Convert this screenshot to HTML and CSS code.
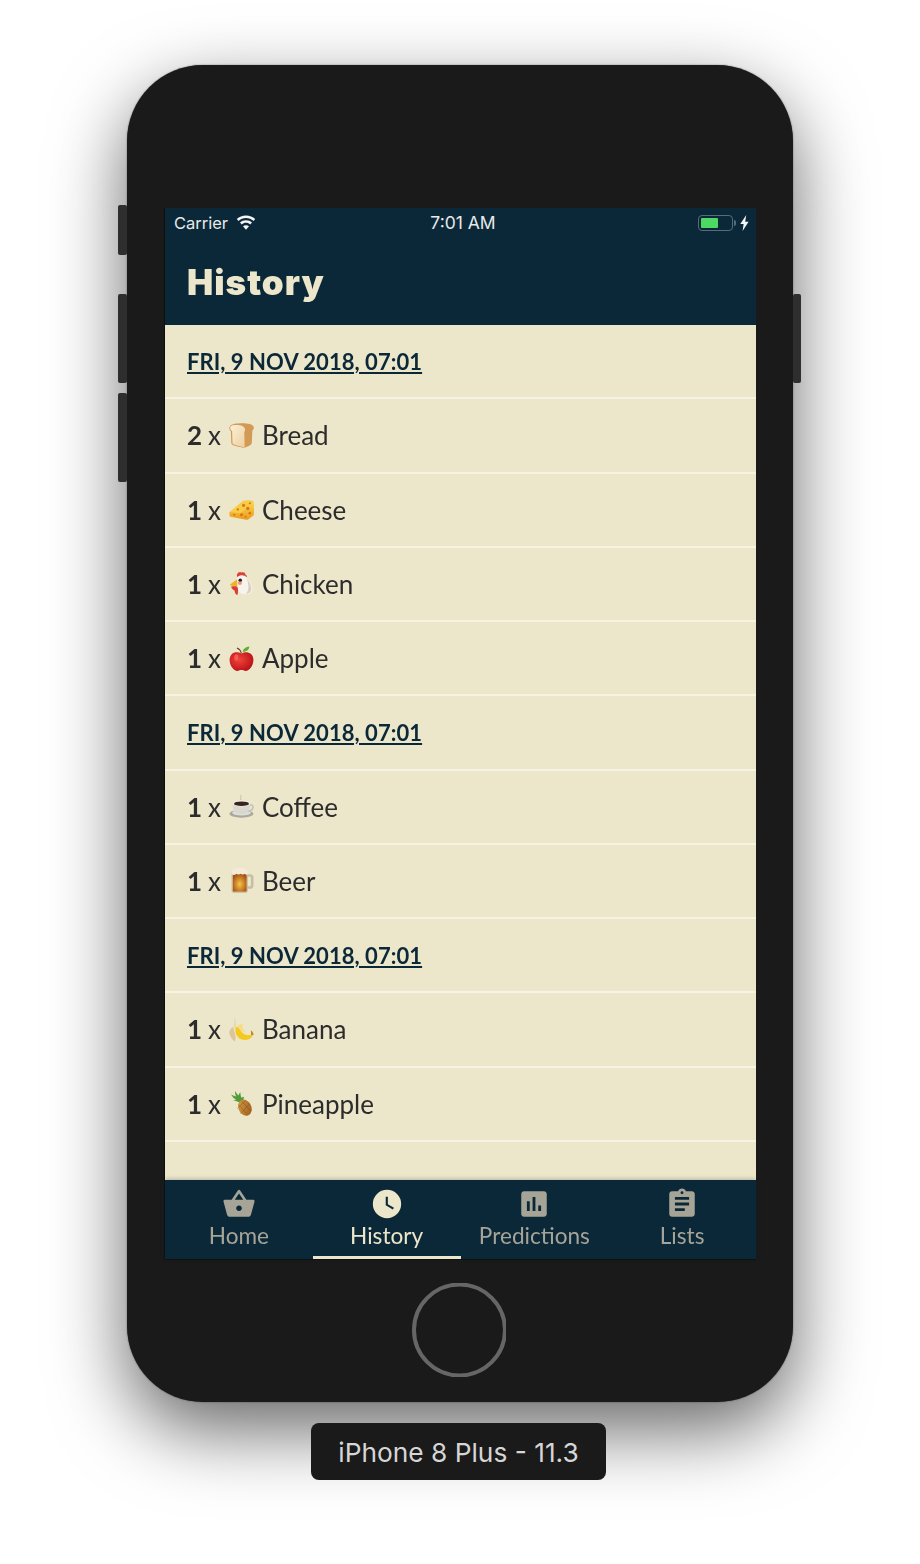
FILE: index.html
```html
<!DOCTYPE html>
<html lang="en">
<head>
<meta charset="utf-8">
<title>History</title>
<link rel="stylesheet" href="styles.css">
</head>
<body>
<svg class="defs" width="0" height="0" aria-hidden="true">
  <defs>
    <linearGradient id="g-bread" x1="0" y1="0" x2="1" y2="1"><stop offset="0" stop-color="#fbf0d8"/><stop offset="1" stop-color="#ecd0a0"/></linearGradient>
    <linearGradient id="g-cheese" x1="0" y1="0" x2="0" y2="1"><stop offset="0" stop-color="#fbd54c"/><stop offset="1" stop-color="#eb9b1e"/></linearGradient>
    <radialGradient id="g-apple" cx=".4" cy=".4" r=".7"><stop offset="0" stop-color="#f2443c"/><stop offset="1" stop-color="#b30d14"/></radialGradient>
    <radialGradient id="g-beer" cx=".5" cy=".6" r=".6"><stop offset="0" stop-color="#f9c24a"/><stop offset="1" stop-color="#a5510f"/></radialGradient>
    <linearGradient id="g-pine" x1="0" y1="0" x2="1" y2="1"><stop offset="0" stop-color="#d9a044"/><stop offset="1" stop-color="#96591c"/></linearGradient>
  </defs>
</svg>

<main class="phone">
  <span class="side-btn vol-a"></span>
  <span class="side-btn vol-b"></span>
  <span class="side-btn vol-c"></span>
  <span class="side-btn power"></span>

  <section class="screen">
    <header class="app-header">
      <div class="status-bar">
        <div class="status-left">
          <span>Carrier</span>
          <svg class="wifi" viewBox="0 0 20 15"><path d="M10 2C6.4 2 3.2 3.3.8 5.5l1.7 1.9C4.5 5.6 7.1 4.5 10 4.5s5.500 1.100 7.500 2.900l1.700-1.900C16.800 3.300 13.600 2 10 2z" transform="translate(0 -1.500)"/><path d="M10 6c-2.300 0-4.400.9-6 2.300l1.800 1.900C6.900 9.200 8.400 8.600 10 8.600s3.100.6 4.200 1.600L16 8.300C14.400 6.900 12.300 6 10 6z" transform="translate(0 -.8)"/><path d="M10 10.200c-1.200 0-2.200.4-3 1.100l3 3.400 3-3.400c-.8-.7-1.800-1.100-3-1.100z"/></svg>
        </div>
        <time class="status-time">7:01 AM</time>
        <div class="status-right">
          <span class="battery"><span class="battery-fill"></span></span>
          <span class="battery-nub"></span>
          <svg class="bolt" viewBox="0 0 9 16"><path d="M6.200 0 .3 9h3.300L2.600 16l6-9.300H5.200z"/></svg>
        </div>
      </div>
      <h1 class="title">History</h1>
    </header>

    <div class="list">
      <div class="row date-row"><a class="date">FRI, 9 NOV 2018, 07:01</a></div>

      <div class="row item">
        <b class="qty">2</b><span class="times">x</span>
        <svg class="emoji" viewBox="0 0 24 24"><path d="M1 3C3 .8 8 .2 13 .3c5 .1 10 .8 10.700 3.500.4 1.600-.5 3-1.300 3.700l-.5 11.500c-.1 1.500-1.500 2.400-3.500 3.200-1.500.6-3 1.300-4.400 1.500-3-.5-7-1.300-10.300-2.700-1-.5-1.500-1-1.500-2L1.800 8C.3 6.800-.2 4.300 1 3z" fill="#d29a55"/><path d="M1.600 3.400C3.500 1.600 9.500 1.500 13 3c2.800 1.200 3 4 1.700 5.300l.3 14.900c-3.700-.6-7.700-1.500-10.600-2.800-.8-.4-1.100-.8-1.100-1.500L3 7.800C1.300 6.800.6 4.500 1.600 3.400z" fill="url(#g-bread)"/></svg>
        <span class="name">Bread</span>
      </div>

      <div class="row item">
        <b class="qty">1</b><span class="times">x</span>
        <svg class="emoji" viewBox="0 0 24 24"><path d="M.5 14.500 13.500 3.500c3-.5 7-.8 10 .3v4L6 18.500 1 17z" fill="#f8cc47"/><path d="M.5 14.500v3.200c0 .7.500 1 1 1.200l15 3c.8.100 1.300 0 1.900-.4l5-3.800c.4-.3.6-.7.6-1.200V5.500L10.500 15.700z" fill="url(#g-cheese)"/><g fill="#d8751a"><circle cx="14" cy="8" r="1.500"/><circle cx="18" cy="11" r="1.600"/><circle cx="8.500" cy="12" r="1.100"/><circle cx="12" cy="17" r="1.500"/><circle cx="20" cy="15.500" r="1.300"/><circle cx="5" cy="17" r="1"/><circle cx="16" cy="19" r=".9"/><circle cx="20" cy="6" r="1"/></g></svg>
        <span class="name">Cheese</span>
      </div>

      <div class="row item">
        <b class="qty">1</b><span class="times">x</span>
        <svg class="emoji" viewBox="0 0 24 24"><path d="M7.500 3.500C9 .5 11 .5 12 1.500 14 .800 16 1.800 15.500 3.300c1.500.300 2 1.700 1.300 2.700H8z" fill="#dd3f35"/><path d="M8 6c2.500-2.500 7-2.500 9 .5 2.500 2 5 6.500 5.500 9.500.5 3.500-2 6-6 6.300-3.500.3-6.500-.8-7.500-3.300C8 17 7 12 8 6z" fill="#f7f4ec"/><path d="M17 7.500c2.500 2 4.500 6.500 4.500 9.500s-2.500 4.800-5.500 5c3-2 3.500-9 1-14.500z" fill="#d8d2c4"/><path d="M7.800 8 .8 13.200c-.2.700 3.200 1.500 7.200 1.300z" fill="#efb31f"/><path d="M2 15c2-.5 4.500-.5 6 0 1 2 1 5.500 0 8-1.500-.3-2.500-2-2.700-4.200C3.800 18 2.500 16.800 2 15z" fill="#d63f34"/><circle cx="10.800" cy="8.800" r="1.700" fill="#222"/><circle cx="10.500" cy="11.500" r="2" fill="#e8615a" opacity=".65"/></svg>
        <span class="name">Chicken</span>
      </div>

      <div class="row item">
        <b class="qty">1</b><span class="times">x</span>
        <svg class="emoji" viewBox="0 0 24 24"><path d="M12.400 7C11.800 4.500 10.500 2.500 8 1.500l-.6.8c2.300 1 3.700 2.700 4 4.900z" fill="#6a3a16"/><path d="M13 5.500c.5-2.700 3-4.700 6.500-5 0 3-2.700 5.300-6.500 5z" fill="#5fb02f"/><path d="M12 7.200C9 5.600 5 5.500 2.600 7.800-.5 11 .2 17 3 20.700c2 2.800 4.500 3.800 6.600 2.900 1.500-.6 3.300-.6 4.800 0 2.100.9 4.600-.1 6.600-2.900 2.800-3.700 3.500-9.700.4-12.900C18 5.500 15 5.600 12 7.200z" fill="url(#g-apple)"/><ellipse cx="7" cy="11" rx="2" ry="3" fill="#ff7d6e" opacity=".55"/></svg>
        <span class="name">Apple</span>
      </div>

      <div class="row date-row"><a class="date">FRI, 9 NOV 2018, 07:01</a></div>

      <div class="row item">
        <b class="qty">1</b><span class="times">x</span>
        <svg class="emoji" viewBox="0 0 24 24"><path d="M11 1c1.500 1.500-1 2.500.5 5" fill="none" stroke="#cfc9b5" stroke-width="1.200"/><ellipse cx="12" cy="19" rx="11.500" ry="3.800" fill="#a9a79e"/><ellipse cx="12" cy="18" rx="9" ry="2.600" fill="#dfdfda"/><path d="M3.500 9c0 5 2 9 4.500 9.800 2.500.6 5.500.6 8 0 2.500-.8 4.500-4.800 4.500-9.800z" fill="#d9d7cf"/><path d="M20 10.500c3.500-1 4.500 3.500.5 5.500l-2 .8" fill="none" stroke="#c3c1b7" stroke-width="1.500"/><ellipse cx="12" cy="9" rx="8.500" ry="2.900" fill="#efeee8"/><ellipse cx="12" cy="9.300" rx="7.200" ry="2.200" fill="#3a231a"/></svg>
        <span class="name">Coffee</span>
      </div>

      <div class="row item">
        <b class="qty">1</b><span class="times">x</span>
        <svg class="emoji" viewBox="0 0 24 24"><path d="M17 6h3.500c1.800 0 3 1.200 3 3v8c0 2-1.300 3-3 3H17v-2.500h3c.6 0 1-.4 1-1v-7c0-.6-.4-1-1-1h-3z" fill="#c8bda5"/><rect x="2.500" y="2.500" width="15.500" height="21.300" rx="2" fill="#c5b899"/><rect x="3.800" y="5" width="13" height="17.500" rx="1" fill="url(#g-beer)"/><path d="M2.500 6C1.500 2.700 4 .2 7 .5c2-1 5-1 7 0 2.500-.3 5 1.500 4 5.500-1 1-2.200.6-2.800-.5-1 1-3 1-4 0-1.300 1-3 1-4 0-1.200 1.300-3.500 1.500-4.700.5z" fill="#f3ead7"/></svg>
        <span class="name">Beer</span>
      </div>

      <div class="row date-row"><a class="date">FRI, 9 NOV 2018, 07:01</a></div>

      <div class="row item">
        <b class="qty">1</b><span class="times">x</span>
        <svg class="emoji" viewBox="0 0 24 24"><path d="M5 .2c1.500 1.500 2 5 1.500 9L4 13C5 8 4.800 4 5 .2z" fill="#e9d9b3"/><path d="M4 9.500c-2 1-3.500 3-3.800 5.500.5 3 2.500 6.500 5.500 8.500 1.300-3 .5-7.500-1-10.500z" fill="#dcc59a"/><path d="M6.500 9c1 1 1.800 1 3 .8 1 2.500 2.700 5.500 5.700 7 3 1.200 6 .5 8 .2-1.500 3.500-5.500 5.700-9.500 4.800C8.500 21 5 16 6.500 9z" fill="#f3c91d"/><path d="M8 8.500c2-1 3.500-2 5.500-2C12 9 13 13 17 15c-4-.5-8-2.500-9-6.500z" fill="#f6dd82"/><path d="M21 13c1.300.500 2.300 2 2.700 4l-2.500.6c0-1.500-.300-3.200-.2-4.600z" fill="#c28a1a"/></svg>
        <span class="name">Banana</span>
      </div>

      <div class="row item">
        <b class="qty">1</b><span class="times">x</span>
        <svg class="emoji" viewBox="0 0 24 24"><path d="M10.500 11.500C9 9.500 6 9.500 3 9c2 0 3-.2 4-.7C5 7.300 3.500 6 2 3c2 1.300 3.500 2 5 2.300C6 3.500 5.500 2 6 0c1 2 2 3.500 3.200 4.200C9.500 3 10 2 11 1.500c0 2 .3 3.700 1 5 .7-.5 1.500-.8 2.500-1-.5 2-1 4-2 6z" fill="#4f9c39"/><ellipse cx="15.300" cy="16" rx="6.200" ry="8" transform="rotate(-25 15.300 16)" fill="url(#g-pine)"/><g stroke="#7a4513" stroke-width=".5" fill="none" opacity=".7"><path d="M9 13l9 10M12 10l9 9M16 9l-8 8M20 12l-9 10"/></g></svg>
        <span class="name">Pineapple</span>
      </div>
    </div>

    <nav class="tabs">
      <a class="tab">
        <svg class="tab-icon" viewBox="0 0 24 24"><path d="M17.210 9l-4.380-6.560c-.190-.280-.510-.420-.830-.420-.320 0-.640.140-.830.430L6.790 9H2c-.550 0-1 .450-1 1 0 .090.010.180.040.270l2.540 9.270c.230.840 1 1.460 1.920 1.460h13c.920 0 1.690-.620 1.930-1.460l2.540-9.270L23 10c0-.550-.450-1-1-1h-4.790zM9 9l3-4.400L15 9H9zm3 8c-1.100 0-2-.9-2-2s.9-2 2-2 2 .9 2 2-.9 2-2 2z"/></svg>
        <span>Home</span>
      </a>
      <a class="tab active">
        <svg class="tab-icon" viewBox="0 0 24 24"><path d="M12 2a10 10 0 1 0 0 20 10 10 0 0 0 0-20zm.6 4.800v5.300l4.300 2.600-.8 1.200-5-3V6.800z"/></svg>
        <span>History</span>
      </a>
      <a class="tab">
        <svg class="tab-icon" viewBox="0 0 24 24"><path d="M19 3H5c-1.100 0-2 .9-2 2v14c0 1.100.9 2 2 2h14c1.100 0 2-.9 2-2V5c0-1.100-.9-2-2-2zM9 17H7v-7h2v7zm4 0h-2V7h2v10zm4 0h-2v-4h2v4z"/></svg>
        <span>Predictions</span>
      </a>
      <a class="tab">
        <svg class="tab-icon" viewBox="0 0 24 24"><path d="M19 3h-4.180C14.400 1.840 13.300 1 12 1c-1.300 0-2.400.840-2.820 2H5c-1.100 0-2 .9-2 2v14c0 1.100.9 2 2 2h14c1.100 0 2-.9 2-2V5c0-1.100-.9-2-2-2zm-7 0c.550 0 1 .450 1 1s-.450 1-1 1-1-.450-1-1 .450-1 1-1zm2 14H7v-2h7v2zm3-4H7v-2h10v2zm0-4H7V7h10v2z"/></svg>
        <span>Lists</span>
      </a>
    </nav>
  </section>

  <svg class="home-btn" viewBox="0 0 94 94"><circle cx="47.500" cy="47" r="45.500" /></svg>
</main>

<div class="device-label">iPhone 8 Plus - 11.3</div>
</body>
</html>
```

FILE: styles.css
```css
* { box-sizing: border-box; }

html, body { margin: 0; padding: 0; }

body {
  width: 920px;
  height: 1564px;
  overflow: hidden;
  background: #fff;
  display: flex;
  flex-direction: column;
  align-items: center;
  padding-top: 65px;
  font-family: "Lato", "Liberation Sans", sans-serif;
}

.defs { position: absolute; }

.phone {
  position: relative;
  width: 666px;
  height: 1337px;
  flex: none;
  padding: 143px 37px 0 38px;
  background: #1a1a1a;
  border-radius: 76px;
  box-shadow: 0 0 1.5px rgba(0, 0, 0, .6), 0 28px 75px rgba(0, 0, 0, .6);
  display: flex;
  flex-direction: column;
  align-items: center;
}

.side-btn {
  position: absolute;
  width: 9px;
  background: #2e2e2e;
  border-radius: 2px;
}
.vol-a { left: -9px; top: 140px; height: 50px; }
.vol-b { left: -9px; top: 229px; height: 89px; }
.vol-c { left: -9px; top: 328px; height: 89px; }
.power { right: -8px; top: 229px; height: 89px; width: 8px; }

.screen {
  width: 591px;
  height: 1051px;
  flex: none;
  display: flex;
  flex-direction: column;
  background: #ece6ca;
  box-shadow: 0 1px 0 #0e0e0e, -1px 0 0 #0e0e0e;
  filter: blur(.4px);
}

.app-header {
  height: 117px;
  flex: none;
  background: #0b2839;
  display: flex;
  flex-direction: column;
}

.status-bar {
  height: 29px;
  display: grid;
  grid-template-columns: 1fr auto 1fr;
  align-items: center;
  padding: 0 7px 0 9px;
  color: #e8eaea;
  font-family: "Inter", "Liberation Sans", sans-serif;
  font-size: 16.500px;
}
.status-left { display: flex; align-items: center; gap: 8px; }
.wifi { width: 20px; height: 15px; fill: #f4f5f5; }
.status-time { margin-left: 3px; font-size: 17.500px; }
.status-right { display: flex; align-items: center; justify-content: flex-end; margin-top: 1px; }
.battery {
  width: 35px;
  height: 16px;
  border: 1.5px solid #566c79;
  border-radius: 4px;
  padding: 2px;
  display: flex;
}
.battery-fill { width: 17px; background: #4cd964; border-radius: 1px; }
.battery-nub { width: 2px; height: 6px; background: #566c79; border-radius: 0 2px 2px 0; margin-left: 1px; }
.bolt { width: 9px; height: 16px; fill: #f4f5f5; margin-left: 4px; }

.title {
  margin: 0;
  padding: 22px 0 0 22px;
  color: #ece6ca;
  font-family: "Inter", "Liberation Sans", sans-serif;
  font-size: 35px;
  font-weight: 900;
  letter-spacing: 1px;
  line-height: 46px;
}

.list {
  flex: 1;
  min-height: 0;
  overflow: hidden;
}

.row {
  height: 74.25px;
  padding-left: 22px;
  display: flex;
  align-items: center;
  border-bottom: 2px solid #f7f3e3;
}

.date-row { padding-top: 1px; }

.date {
  color: #0b2839;
  font-size: 22px;
  font-weight: 700;
  letter-spacing: .05px;
  text-decoration: underline;
}

.item { color: #2c2c2c; font-size: 26px; line-height: 32px; }
.qty { font-weight: 700; width: 21px; }
.times { width: 21px; }
.emoji { width: 25px; height: 25px; flex: none; }
.name { margin-left: 8px; }

.tabs {
  height: 79px;
  flex: none;
  background: #0b2839;
  display: grid;
  grid-template-columns: repeat(4, 1fr);
  box-shadow: 0 -1px 4px rgba(11, 40, 57, .25);
  position: relative;
}
.tab {
  display: flex;
  flex-direction: column;
  align-items: center;
  padding-top: 7px;
  color: #a5a497;
  font-size: 22.600px;
  line-height: 30px;
  border-bottom: 3px solid transparent;
}
.tab.active { color: #ece6ca; border-bottom-color: #ece6ca; }
.tab-icon { width: 34px; height: 34px; fill: currentColor; flex: none; }

.home-btn {
  width: 94px;
  height: 94px;
  flex: none;
  margin: 24px 3px 0 0;
  fill: none;
  stroke: #666;
  stroke-width: 4;
}

.device-label {
  width: 295px;
  height: 57px;
  flex: none;
  margin: 21px 3px 0 0;
  padding-top: 2px;
  display: flex;
  align-items: center;
  justify-content: center;
  background: #1a1a1a;
  border-radius: 8px;
  color: #d6d6d6;
  font-family: "Inter", "Liberation Sans", sans-serif;
  font-size: 26.300px;
  position: relative;
}
```
